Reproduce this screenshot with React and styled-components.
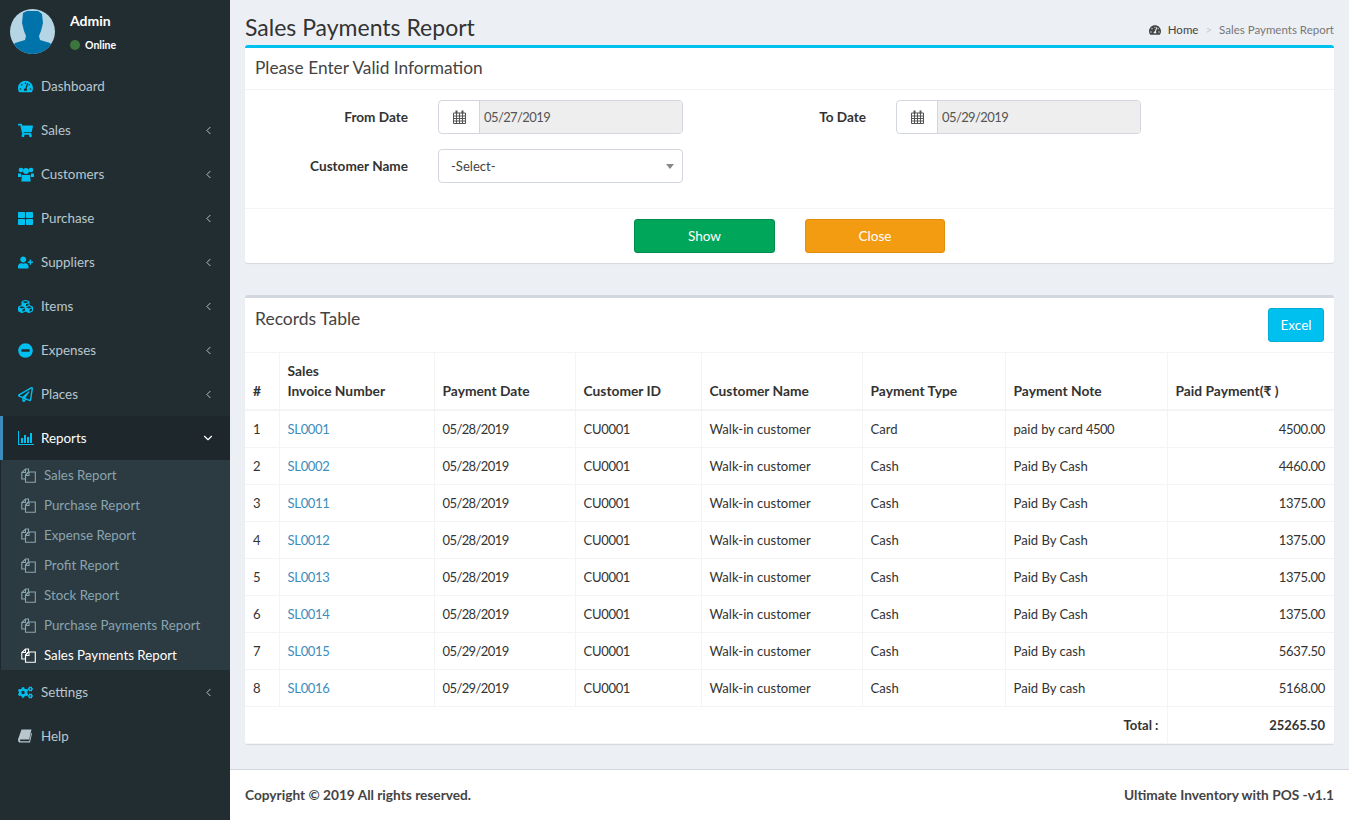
import React from "react";
import styled, { createGlobalStyle } from "styled-components";
import {
  FaTachometerAlt, FaShoppingCart, FaThLarge, FaUserPlus, FaCubes,
  FaMinusCircle, FaRegPaperPlane, FaCogs,
} from "react-icons/fa";
import { ChevronLeft, ChevronDown } from "lucide-react";

const FONT = `"Lato", "Noto Sans", "Liberation Sans", sans-serif`;

const Global = createGlobalStyle`
  html, body { margin: 0; padding: 0; height: 100%; }
  body { font-family: ${FONT}; font-size: 13.3px; color: #333; background: #ecf0f5; }
  * { box-sizing: border-box; }
`;

const Page = styled.div`display: flex; width: 1349px; height: 820px; overflow: hidden;`;
const Sidebar = styled.aside`width: 230px; flex: none; background: #222d32; display: flex; flex-direction: column;`;
const UserPanel = styled.div`height: 64px; flex: none; display: flex; padding: 9px 0 0 10px;`;
const AvatarSvg = styled.svg`width: 45px; height: 45px; flex: none; border-radius: 50%;`;
const UserInfo = styled.div`margin-left: 15px; color: #fff; display: flex; flex-direction: column;`;
const UserName = styled.div`font-weight: 700; font-size: 14px; line-height: 18px; margin-top: 3px;`;
const UserStatus = styled.div`display: flex; align-items: center; gap: 5px; font-size: 10.5px; font-weight: 700; margin-top: 8px; line-height: 14px;`;
const Dot = styled.span`width: 10px; height: 10px; border-radius: 50%; background: #3c763d;`;

const NavRow = styled.div`
  height: 44px; flex: none; display: flex; align-items: center;
  padding-left: ${p => (p.$active ? "15px" : "18px")};
  padding-right: 15px;
  font-size: 13.4px;
  color: ${p => (p.$active ? "#fff" : "#b8c7ce")};
  background: ${p => (p.$active ? "#1e282c" : "transparent")};
  border-left: ${p => (p.$active ? "3px solid #3c8dbc" : "none")};
`;
const NavIcon = styled.span`
  width: 23px; flex: none; display: flex; align-items: center; font-size: 15px;
  color: ${p => (p.$plain ? "#b8c7ce" : "#00c0ef")};
`;
const NavLabel = styled.span`flex: 1;`;
const Chevron = styled.span`display: flex; color: ${p => (p.$active ? "#fff" : "#b8c7ce")};`;
const SubMenu = styled.div`background: #2c3b41; border-left: 1px solid #1e282c; display: flex; flex-direction: column;`;
const SubRow = styled.div`
  height: 30px; display: flex; align-items: center; padding-left: 20px;
  color: ${p => (p.$active ? "#fff" : "#8aa4af")};
`;
const SubLabel = styled.span`padding-bottom: 1px;`;
const FilesSvg = styled.svg`width: 15px; height: 15px; flex: none; margin-right: 8px;`;

const Main = styled.main`flex: 1; min-width: 0; display: flex; flex-direction: column;`;
const Content = styled.div`flex: 1; padding: 0 15px;`;
const TitleBar = styled.div`height: 45px; display: flex; justify-content: space-between; align-items: flex-end;`;
const PageTitle = styled.h1`margin: 0 0 1px; font-size: 23px; font-weight: 400; line-height: 34px;`;
const Crumbs = styled.div`display: flex; align-items: center; font-size: 11.5px; margin-bottom: 9px; color: #444;`;
const CrumbIcon = styled.span`display: flex; font-size: 12px; margin-right: 7px;`;
const CrumbSep = styled.span`color: #ccc; margin: 0 7px;`;
const CrumbCurrent = styled.span`color: #777;`;

const Box = styled.section`
  background: #fff; border-top: 3px solid ${p => p.$accent}; border-radius: 3px;
  box-shadow: 0 1px 1px rgba(0,0,0,.1); margin-bottom: ${p => p.$mb || 0}px;
`;
const BoxHead = styled.div`height: 42px; padding: 0 10px 2px; display: flex; align-items: center; font-size: 17.3px; border-bottom: 1px solid #f4f4f4; color: #444;`;
const FormBody = styled.div`height: 119px; padding-top: 10px; display: flex; flex-direction: column; gap: 15px; border-bottom: 1px solid #f4f4f4;`;
const FormRow = styled.div`display: flex; height: 34px; align-items: center;`;
const Label = styled.label`width: ${p => p.$w}px; text-align: right; font-weight: 700; font-size: 13.6px; flex: none;`;
const InputGroup = styled.div`
  display: flex; width: 245px; height: 34px; margin-left: 30px;
  border: 1px solid #d2d6de; border-radius: 4px; overflow: hidden; flex: none;
`;
const Addon = styled.span`width: 41px; flex: none; display: flex; align-items: center; justify-content: center; border-right: 1px solid #d2d6de; color: #555;`;
const DateValue = styled.span`flex: 1; background: #eee; display: flex; align-items: center; padding-left: 4px; color: #555;`;
const SelectBox = styled.div`
  position: relative; width: 245px; height: 34px; margin-left: 30px; flex: none; font-size: 13.1px;
  border: 1px solid #d2d6de; border-radius: 4px; display: flex; align-items: center; padding-left: 12px; color: #444;
  &::after { content: ""; position: absolute; right: 8px; top: 14px; border: 4px solid transparent; border-top: 5px solid #888; border-bottom: 0; }
`;
const FootBar = styled.div`height: 54px; display: flex; align-items: center; padding-left: 389px; gap: 30px;`;
const Button = styled.div`
  width: ${p => p.$w}px; height: 34px; display: flex; align-items: center; justify-content: center; font-size: 13.6px;
  color: #fff; border-radius: 3px; background: ${p => p.$bg}; border: 1px solid ${p => p.$bd};
`;
const RecordsHead = styled.div`height: 54px; padding: 10px 10px 0; display: flex; justify-content: space-between; align-items: flex-start;`;
const RecordsTitle = styled.div`font-size: 17.5px; line-height: 22px; color: #444;`;
const ExcelButton = styled(Button)`margin-left: auto;`;
const Table = styled.table`width: 1089px; table-layout: fixed; border-collapse: collapse;`;
const Col = styled.col`width: ${p => p.$w}px;`;
const Th = styled.th`
  border: 1px solid #f4f4f4; border-bottom-width: 2px; padding: 8px;
  text-align: left; vertical-align: bottom; line-height: 20px; font-weight: 700; font-size: 13.8px;
  &:first-child { border-left: 0; } &:last-child { border-right: 0; }
`;
const Td = styled.td`
  border: 1px solid #f4f4f4; height: 37px; padding: 0 8px; line-height: 20px; font-size: 13.1px;
  text-align: ${p => (p.$right ? "right" : "left")}; font-weight: ${p => (p.$bold ? 700 : 400)};
  &:first-child { border-left: 0; } &:last-child { border-right: 0; padding-right: 9px; }
`;
const Num = styled.span`font-size: 13px; letter-spacing: ${p => p.$ls ?? -0.6}px;`;
const Invoice = styled.a`color: #3c8dbc; text-decoration: none;`;
const Footer = styled.footer`
  height: 51px; flex: none; background: #fff; border-top: 1px solid #d2d6de; padding: 0 15px 2px;
  display: flex; justify-content: space-between; align-items: center; font-weight: 700; font-size: 13.7px; color: #444;
`;

const Avatar = () => (
  <AvatarSvg viewBox="0 0 45 45">
    <rect width="45" height="45" fill="#b5d5e5" />
    <path fill="#0073aa" d="M13 4 L17 2 H28 L32 5 L33 14 L31 22 L29 27 L30 31 L40 34 L45 40 V45 H0 V40 L5 34 L15 31 L16 27 L14 22 L12 14 Z" />
  </AvatarSvg>
);
const Files = () => (
  <FilesSvg viewBox="0 0 15 15" fill="none" stroke="currentColor" strokeWidth="1.1">
    <path d="M4.5 1 H7.5 V4 L4.5 7 V11 H.8 V4.5 Z" />
    <path d="M7.5 4 H14.3 V14.3 H4.5 V7.5 Z" />
    <path d="M4.5 1 V4.5 H.8 M8 4 V7.5 H4.5" />
  </FilesSvg>
);
const Calendar = () => (
  <svg width="13" height="14" viewBox="0 0 13 14" fill="none" stroke="currentColor" strokeWidth="1">
    <path d="M.5 3h12v10.5H.5zM.5 6h12M.5 8.5h12M.5 11h12M3.5 3v10.5M6.5 3v10.5M9.5 3v10.5" />
    <path d="M3.5 .5v3M9.5 .5v3" strokeWidth="2" />
  </svg>
);
const Bars = () => (
  <svg width="16" height="14" viewBox="0 0 16 14" fill="currentColor">
    <path d="M0 0h1v13h15v1H0zM3 7h2v5H3zM6 4h2v8H6zM9 6h2v6H9zM12 2h2v10h-2z" />
  </svg>
);
const Users = () => (
  <svg width="16" height="15" viewBox="0 0 16 15" fill="currentColor">
    <circle cx="3" cy="3" r="2.3" /><circle cx="13" cy="3" r="2.3" /><circle cx="8" cy="4" r="3" />
    <path d="M0 6.5 H3 L3.5 10 H0 ZM16 6.5 H13 L12.5 10 H16 Z" />
    <path d="M4 8 H12 L12.7 14.5 H3.3 Z" />
  </svg>
);
const BookIcon = () => (
  <svg width="14" height="14" viewBox="0 0 14 14" fill="currentColor">
    <path d="M3.5 .5 H13.5 L11.2 10.5 H2.6 C1.8 10.5 1.6 12.2 2.6 12.2 H11.3 L13.2 4 L14 4.6 L12 13.5 H2 C.4 13.5 -.3 11.5 .3 9.5 Z" />
  </svg>
);

const navTop = [
  ["Dashboard", <FaTachometerAlt />, false],
  ["Sales", <FaShoppingCart />, true],
  ["Customers", <Users />, true],
  ["Purchase", <FaThLarge />, true],
  ["Suppliers", <FaUserPlus />, true],
  ["Items", <FaCubes />, true],
  ["Expenses", <FaMinusCircle />, true],
  ["Places", <FaRegPaperPlane />, true],
];
const subs = ["Sales Report", "Purchase Report", "Expense Report", "Profit Report", "Stock Report", "Purchase Payments Report", "Sales Payments Report"];
const rows = [
  ["SL0001", "05/28/2019", "Card", "paid by card ", "4500", "4500.00"],
  ["SL0002", "05/28/2019", "Cash", "Paid By Cash", "", "4460.00"],
  ["SL0011", "05/28/2019", "Cash", "Paid By Cash", "", "1375.00"],
  ["SL0012", "05/28/2019", "Cash", "Paid By Cash", "", "1375.00"],
  ["SL0013", "05/28/2019", "Cash", "Paid By Cash", "", "1375.00"],
  ["SL0014", "05/28/2019", "Cash", "Paid By Cash", "", "1375.00"],
  ["SL0015", "05/29/2019", "Cash", "Paid By cash", "", "5637.50"],
  ["SL0016", "05/29/2019", "Cash", "Paid By cash", "", "5168.00"],
];
const widths = [34, 155, 141, 126, 161, 143, 162, 167];

const NavItem = ({ label, icon, arrow, plain }) => (
  <NavRow>
    <NavIcon $plain={plain}>{icon}</NavIcon>
    <NavLabel>{label}</NavLabel>
    {arrow && <Chevron><ChevronLeft size={13} strokeWidth={1.8} /></Chevron>}
  </NavRow>
);

export default function App() {
  return (
    <Page>
      <Global />
      <Sidebar>
        <UserPanel>
          <Avatar />
          <UserInfo>
            <UserName>Admin</UserName>
            <UserStatus><Dot />Online</UserStatus>
          </UserInfo>
        </UserPanel>
        {navTop.map(([l, i, a]) => <NavItem key={l} label={l} icon={i} arrow={a} />)}
        <NavRow $active>
          <NavIcon><Bars /></NavIcon>
          <NavLabel>Reports</NavLabel>
          <Chevron $active><ChevronDown size={14} strokeWidth={2} /></Chevron>
        </NavRow>
        <SubMenu>
          {subs.map((s, i) => (
            <SubRow key={s} $active={i === subs.length - 1}><Files /><SubLabel>{s}</SubLabel></SubRow>
          ))}
        </SubMenu>
        <NavItem label="Settings" icon={<FaCogs />} arrow />
        <NavItem label="Help" icon={<BookIcon />} plain />
      </Sidebar>
      <Main>
        <Content>
          <TitleBar>
            <PageTitle>Sales Payments Report</PageTitle>
            <Crumbs>
              <CrumbIcon><FaTachometerAlt /></CrumbIcon>Home<CrumbSep>&gt;</CrumbSep>
              <CrumbCurrent>Sales Payments Report</CrumbCurrent>
            </Crumbs>
          </TitleBar>
          <Box $accent="#00c0ef" $mb={32}>
            <BoxHead>Please Enter Valid Information</BoxHead>
            <FormBody>
              <FormRow>
                <Label $w={163}>From Date</Label>
                <InputGroup>
                  <Addon><Calendar /></Addon>
                  <DateValue><Num>05/27/2019</Num></DateValue>
                </InputGroup>
                <Label $w={183}>To Date</Label>
                <InputGroup>
                  <Addon><Calendar /></Addon>
                  <DateValue><Num>05/29/2019</Num></DateValue>
                </InputGroup>
              </FormRow>
              <FormRow>
                <Label $w={163}>Customer Name</Label>
                <SelectBox>-Select-</SelectBox>
              </FormRow>
            </FormBody>
            <FootBar>
              <Button $w={141} $bg="#00a65a" $bd="#008d4c">Show</Button>
              <Button $w={140} $bg="#f39c12" $bd="#e08e0b">Close</Button>
            </FootBar>
          </Box>
          <Box $accent="#d2d6de">
            <RecordsHead>
              <RecordsTitle>Records Table</RecordsTitle>
              <ExcelButton $w={56} $bg="#00c0ef" $bd="#00acd6">Excel</ExcelButton>
            </RecordsHead>
            <Table>
              <colgroup>{widths.map((w, i) => <Col key={i} $w={w} />)}</colgroup>
              <thead>
                <tr>
                  <Th>#</Th>
                  <Th>Sales<br />Invoice Number</Th>
                  <Th>Payment Date</Th>
                  <Th>Customer ID</Th>
                  <Th>Customer Name</Th>
                  <Th>Payment Type</Th>
                  <Th>Payment Note</Th>
                  <Th>Paid Payment(₹ )</Th>
                </tr>
              </thead>
              <tbody>
                {rows.map((r, i) => (
                  <tr key={r[0]}>
                    <Td>{i + 1}</Td>
                    <Td><Invoice><Num $ls={-0.3}>{r[0]}</Num></Invoice></Td>
                    <Td><Num>{r[1]}</Num></Td>
                    <Td><Num $ls={-0.3}>CU0001</Num></Td>
                    <Td>Walk-in customer</Td>
                    <Td>{r[2]}</Td>
                    <Td>{r[3]}{r[4] && <Num>{r[4]}</Num>}</Td>
                    <Td $right><Num $ls={-0.3}>{r[5]}</Num></Td>
                  </tr>
                ))}
                <tr>
                  <Td colSpan={7} $right $bold>Total :</Td>
                  <Td $right $bold><Num $ls={0}>25265.50</Num></Td>
                </tr>
              </tbody>
            </Table>
          </Box>
        </Content>
        <Footer>
          <span>Copyright © 2019 All rights reserved.</span>
          <span>Ultimate Inventory with POS -v1.1</span>
        </Footer>
      </Main>
    </Page>
  );
}
